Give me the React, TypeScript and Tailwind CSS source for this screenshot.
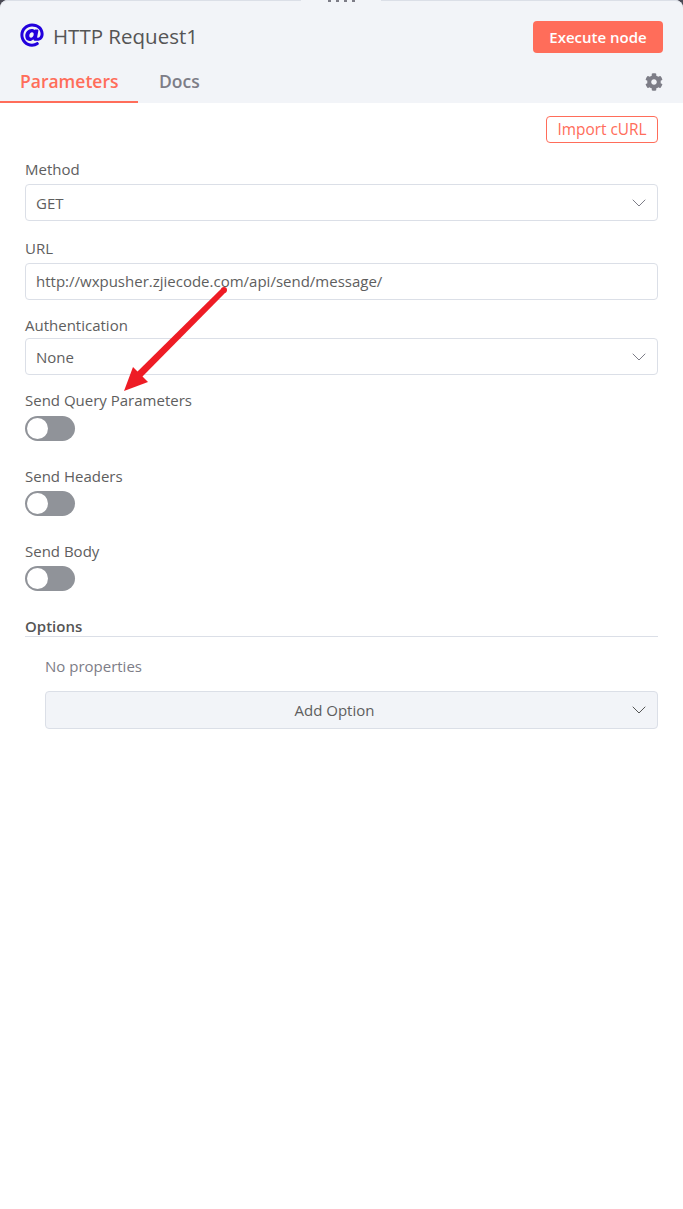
import React from "react";
import { ChevronDown } from "lucide-react";
import { FaAt, FaCog } from "react-icons/fa";

const Label: React.FC<{ text: string }> = ({ text }) => (
  <div className="h-[18px] text-[15px] leading-[18px] text-[#5e5e5e]">{text}</div>
);

const SelectBox: React.FC<{ value: string }> = ({ value }) => (
  <div className="flex h-[37px] items-center justify-between rounded border border-[#dbdfe7] bg-white pl-[10px] pr-[6px] text-[15px] text-[#5e5e5e]">
    <span className="pt-[2px]">{value}</span>
    <ChevronDown className="h-[24px] w-[24px] text-[#7d7d87]" strokeWidth={1} />
  </div>
);

const Toggle: React.FC = () => (
  <div className="flex h-[25px] w-[50px] items-center rounded-full bg-[#909399] pl-[1.5px]">
    <div className="h-[21px] w-[21px] rounded-full bg-white" />
  </div>
);

const App: React.FC = () => {
  return (
    <div className="relative h-[1209px] w-[683px] overflow-hidden bg-[#4a4a55] font-['Open_Sans',sans-serif]">
      <div className="h-full rounded-t-lg bg-white">
        {/* header */}
        <div className="relative h-[103px] rounded-t-lg border-t border-[#dbdfe7] bg-[#f2f4f8]">
          {/* drag handle */}
          <div className="absolute -top-px left-[301px] flex h-[3px] w-[80px] justify-center gap-[5px] bg-[#f2f4f8]">
            <div className="h-[2px] w-[3px] bg-[#7d7d87]" />
            <div className="h-[2px] w-[3px] bg-[#7d7d87]" />
            <div className="h-[2px] w-[3px] bg-[#7d7d87]" />
            <div className="h-[2px] w-[3px] bg-[#7d7d87]" />
          </div>
          <div className="flex h-[57px] items-center justify-between pl-5 pr-5 pt-[15px]">
            <div className="flex items-center">
              <FaAt className="h-[24px] w-[24px] -translate-y-[2px] text-[#2200dd]" />
              <span className="ml-[9px] pb-[2px] text-[20.5px] font-medium text-[#555555]">HTTP Request1</span>
            </div>
            <button className="flex h-[32px] w-[130px] items-center justify-center rounded bg-[#ff6d5a] text-[15px] font-semibold text-white">
              Execute node
            </button>
          </div>
          <div className="flex h-[45px] items-stretch justify-between pr-5">
            <div className="flex">
              <div className="flex w-[138px] items-center border-b-2 border-[#ff6d5a] pl-5 pt-[4px] text-[17.5px] font-semibold text-[#ff6d5a]">
                Parameters
              </div>
              <div className="ml-[21px] flex items-center pt-[2px] text-[17.5px] font-semibold text-[#7d7d87]">Docs</div>
            </div>
            <div className="flex items-center pt-[2px]">
              <FaCog className="h-[18px] w-[18px] text-[#7d7d87]" />
            </div>
          </div>
        </div>

        {/* form */}
        <div className="flex flex-col px-[25px] pt-[13px]">
          <div className="flex justify-end">
            <button className="flex h-[27px] w-[112px] items-center justify-center rounded border border-[#ff6d5a] text-[15.4px] font-medium text-[#ff6d5a]">
              Import cURL
            </button>
          </div>

          <div className="mt-[17px]">
            <Label text="Method" />
          </div>
          <div className="mt-[6px]">
            <SelectBox value="GET" />
          </div>

          <div className="mt-[18px]">
            <Label text="URL" />
          </div>
          <div className="mt-[6px]">
            <div className="flex h-[37px] items-center rounded border border-[#dbdfe7] bg-white pl-[10px] text-[15px] text-[#5e5e5e]">
              http://wxpusher.zjiecode.com/api/send/message/
            </div>
          </div>

          <div className="mt-[16px]">
            <Label text="Authentication" />
          </div>
          <div className="mt-[4px]">
            <SelectBox value="None" />
          </div>

          <div className="mt-[16px]">
            <Label text="Send Query Parameters" />
          </div>
          <div className="mt-[7px]">
            <Toggle />
          </div>

          <div className="mt-[26px]">
            <Label text="Send Headers" />
          </div>
          <div className="mt-[6px]">
            <Toggle />
          </div>

          <div className="mt-[26px]">
            <Label text="Send Body" />
          </div>
          <div className="mt-[6px]">
            <Toggle />
          </div>

          <div className="mt-[27px] h-[19px] border-b border-[#dbdfe7] text-[15px] font-semibold leading-[16px] text-[#555555]">
            Options
          </div>

          <div className="pl-5">
            <div className="mt-[20px] h-[18px] text-[15px] leading-[18px] text-[#7d7d87]">No properties</div>
            <div className="relative mt-[16px] flex h-[38px] items-center justify-center rounded border border-[#dbdfe7] bg-[#f2f4f8] pr-[34px] text-[15px] text-[#5e5e5e]">
              Add Option
              <ChevronDown className="absolute right-[6px] h-[24px] w-[24px] text-[#555555]" strokeWidth={1} />
            </div>
          </div>
        </div>
      </div>

      {/* red annotation arrow */}
      <svg className="absolute left-0 top-0 h-[1209px] w-[683px]" viewBox="0 0 683 1209" fill="none">
        <circle cx="224" cy="290" r="3" fill="#ee1c25" />
        <path d="M226 292 L140.5 378.5 L135.5 373.5 L222 288 Z" fill="#ee1c25" />
        <path d="M124 391 L133 367 L148 382 Z" fill="#ee1c25" />
      </svg>
    </div>
  );
};

export default App;
